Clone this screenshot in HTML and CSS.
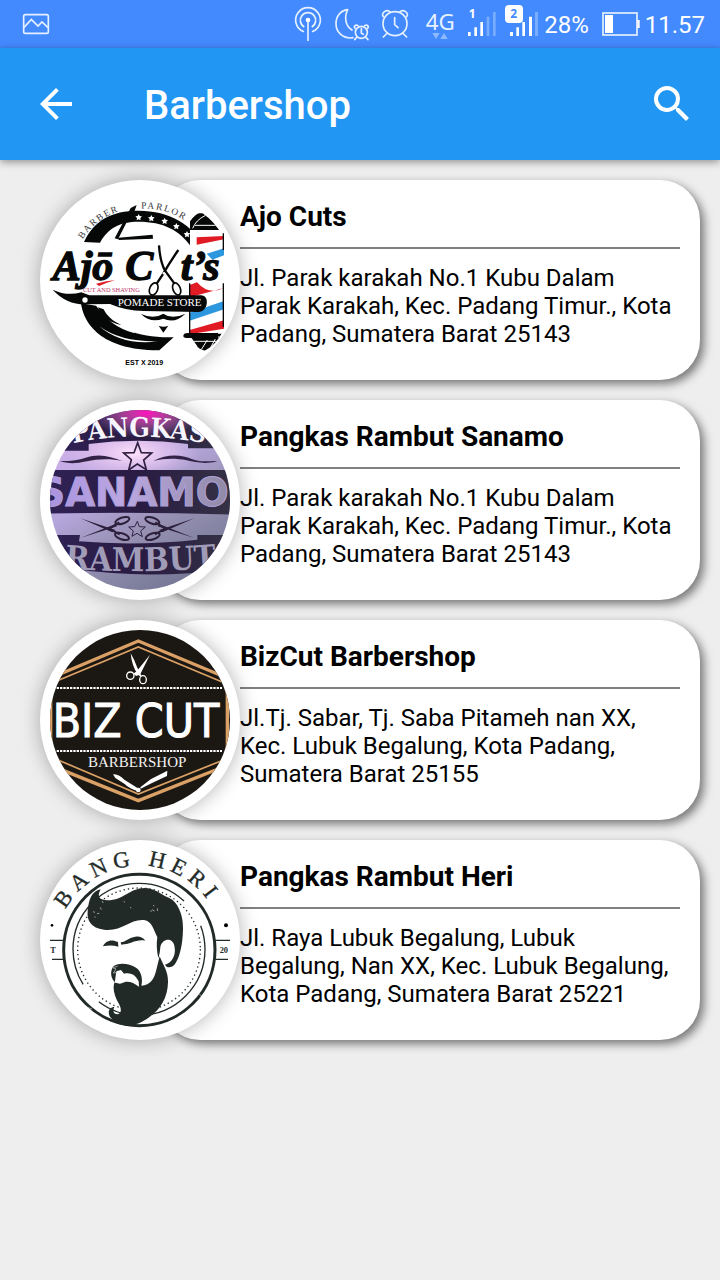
FILE: index.html
```html
<!DOCTYPE html>
<html lang="id">
<head>
<meta charset="utf-8">
<meta name="viewport" content="width=device-width, initial-scale=1">
<title>Barbershop</title>
<link rel="stylesheet" href="styles.css">
</head>
<body>
<div class="status">
  <svg class="status-icon thumb" viewBox="60 0 96 144" aria-hidden="true">
    <g fill="none" stroke="#e6f1ff" stroke-width="5"><rect x="71" y="44" width="74" height="56" rx="5"/><path d="M72 82 94 58l20 20 12-12 18 17"/></g>
  </svg>
  <div class="status-right">
    <svg class="status-icon w38" viewBox="30 0 114 144" aria-hidden="true">
      <g fill="none" stroke="#e6f1ff" stroke-width="5"><path d="M72 95a37 37 0 1 1 24 0"/><path d="M73 81a23 23 0 1 1 22 0"/><path d="M84 60v63"/></g><circle cx="84" cy="60" r="7" fill="#fff"/>
    </svg>
    <svg class="status-icon w46" viewBox="144 0 138 144" aria-hidden="true">
      <g fill="none" stroke="#e6f1ff" stroke-width="5" stroke-linecap="round"><path d="M203 29C181 32 168 49 168 71c0 25 19 43 43 43l8-1M203 29c-11 23-7 48 13 61"/><circle cx="244" cy="97" r="18"/><path d="M244 86v13l6 4M225 85c-5-6 2-13 9-8M254 77c7-5 14 2 9 8M231 111l-7 8M257 111l7 8"/></g>
    </svg>
    <svg class="status-icon w44" viewBox="282 0 132 144" aria-hidden="true">
      <g fill="none" stroke="#e6f1ff" stroke-width="5" stroke-linecap="round"><circle cx="345" cy="71" r="36"/><path d="M344 53v21l10 9M310 50c-9-11 11-25 21-14M359 36c10-11 30 3 21 14M322 99l-12 12M368 99l12 12"/></g>
    </svg>
    <svg class="status-icon w44" viewBox="414 0 132 144" role="img" aria-label="4G">
      <text class="net" x="437" y="91">4G</text><path d="M457 99h22l-11 18zM481 117h22l-11-18z" fill="#8db9ff"/>
    </svg>
    <svg class="status-icon w38" viewBox="546 0 114 144" role="img" aria-label="SIM 1">
      <text class="sim" x="566" y="53" fill="#fff">1</text>
      <path d="M564 96h8v12h-8zM583 82h8v26h-8zM601 66h8v42h-8z" fill="#fff"/><path d="M620 50h8v58h-8zM639 36h8v72h-8z" fill="#79adff"/>
    </svg>
    <svg class="status-icon w44" viewBox="0 0 132 144" role="img" aria-label="SIM 2">
      <path d="M30 96h9v12h-9zM49 82h8v26h-8zM67 66h8v42h-8zM87 50h9v58h-9z" fill="#fff"/><path d="M105 36h9v72h-9z" fill="#79adff"/><rect x="15" y="15" width="54" height="54" rx="12" fill="#fff"/>
      <text class="sim" x="31" y="54" fill="#448aff">2</text>
    </svg>
    <span>28%</span>
    <svg class="status-icon w56" viewBox="270 0 168 144" role="img" aria-label="Baterai">
      <rect x="312" y="39" width="102" height="66" fill="none" stroke="#e6f1ff" stroke-width="5"/><path d="M318 45h24v54h-24zM415 60h7v24h-7z" fill="#fff"/>
    </svg>
    <time>11.57</time>
  </div>
</div>
<header class="appbar">
  <button class="icon-button" type="button" aria-label="Kembali"><svg viewBox="0 0 24 24"><path d="M20 11H7.800l5.600-5.600L12 4l-8 8 8 8 1.400-1.400L7.800 13H20z"/></svg></button>
  <h1>Barbershop</h1>
  <button class="icon-button" type="button" aria-label="Cari"><svg viewBox="0 0 24 24"><path d="M15.500 14h-.79l-.28-.27A6.470 6.470 0 0 0 16 9.500 6.500 6.500 0 1 0 9.500 16c1.610 0 3.090-.59 4.230-1.570l.27.280v.790l5 4.990L20.490 19zm-6 0a4.500 4.500 0 1 1 0-9 4.500 4.500 0 0 1 0 9z"/></svg></button>
</header>
<main>
<ul class="shops">
  <li class="shop">
    <div class="avatar">
    <svg viewBox="30 30 600 600" role="img" aria-label="Ajo Cuts">
      <defs><path id="arc1a" d="M158 208A198 198 0 0 1 290 118"/><path id="arc1b" d="M334 116A210 210 0 0 1 500 182"/>
      <clipPath id="pole"><path d="M479 155q30-40 45-20 25 15 58 67v276q-25 50-58 64-20-5-24-16l-21-30z"/></clipPath></defs>
      <g fill="#060808">
        <path d="M162 216C192 151 245 122 325 122c95 0 164 43 198 110l-40-2C450 181 400 155 325 155c-55 0-90 18-115 63z"/>
        <path d="M153 400c8 60 60 142 235 141l43-39c-90 0-170-15-233-95z"/>
        <path d="M320 105l-18 9-48 91 10 3 39-77-4 19 8-7zM265 203l103-9 1 12-103 4z"/>
      </g>
      <path d="M206 410q30 58 108 80l-20-52z" fill="#fff"/>
      <path d="M204 412c13 31 34 46 70 53-27-12-43-27-53-47z" fill="#060808"/>
      <path d="M208 469q65 48 178 45-110 14-178-45z" fill="#fff"/>
      <g fill="#fff"><path id="star" d="m326 132 3 6 7 1-5 5 1 7-6-3-6 3 1-7-5-5 7-1z"/><use href="#star" x="38" y="3"/><use href="#star" x="78" y="11"/><use href="#star" x="113" y="27"/><use href="#star" x="145" y="51"/></g>
      <g clip-path="url(#pole)"><path d="M479 130h110v420H479z" fill="#fff"/><path d="M500 202l82-4v10l-82 16zM479 345l22-8q35 40 81 17l-103 28zM479 480l103-29v25l-103 17z" fill="#e01b24"/><path d="M530 251l52-16v21l-35 13zM479 428l103-35v25l-103 34z" fill="#2c96df"/><path d="M480 130h105v50H480zM478 491h107v60H478z" fill="#060808"/><path d="M488 175q10-25 37-38M495 166h80M482 190h102M482 501h100M492 514h80M510 545l22-35M537 541l19-34" fill="none" stroke="#fff" stroke-width="3"/></g>
      <path d="M479 340v150M580 190v50M580 340v130" stroke="#060808" stroke-width="4"/><path d="M460 498q0-9 14-9h90v15h-90q-14 0-14-6z" fill="#060808"/>
      <g class="script"><text x="68" y="331">Ajō</text><text x="286" y="331">C</text><text x="452" y="331">t’s</text></g>
      <path d="M198 341q27-8 57-11-28 9-48 18z" fill="#e01b24"/>
      <g fill="#fff" stroke="#060808" stroke-width="5"><path d="M387 226q3 48 18 76l28 38M445 240q-27 39-45 71l-20 30" fill="none" stroke-width="7"/><ellipse cx="371" cy="357" rx="12" ry="19" transform="rotate(22 371 357)"/><ellipse cx="440" cy="357" rx="11" ry="19" transform="rotate(-22 440 357)"/></g><circle cx="402" cy="310" r="4" fill="#fff"/>
      <path d="M68 359q43 20 86 8l24 9h335c27 0 22 50-8 50l-164-3q-55-1-101-21l-68 1q-61 3-104-44z" fill="#060808"/><circle cx="165" cy="390" r="8" fill="#fff"/>
      <text class="serif" x="159" y="367" font-size="19" fill="#bd3267">CUT AND SHAVING</text>
      <text class="serif" x="263" y="409" font-size="33" fill="#fff">POMADE STORE</text>
      <path d="M333 432q39 17 67-1 26 19 66 0-31 31-66 15-38 15-67-14zM386 467q15 6 29 0l-15 21z" fill="#060808"/>
      <g class="serif small" fill="#333"><text><textPath href="#arc1a">BARBER</textPath></text><text><textPath href="#arc1b">PARLOR</textPath></text></g>
      <text class="sans-bold" x="286" y="585" font-size="21">EST X 2019</text>
    </svg></div>
    <article class="card"><h2>Ajo Cuts</h2><p>Jl. Parak karakah No.1 Kubu Dalam Parak Karakah, Kec. Padang Timur., Kota Padang, Sumatera Barat 25143</p></article>
  </li>
  <li class="shop">
    <div class="avatar">
    <svg viewBox="30 30 600 600" role="img" aria-label="Pangkas Rambut Sanamo">
      <defs><clipPath id="disc"><circle cx="330" cy="330" r="270"/></clipPath>
      <linearGradient id="cloth" x1=".2" y1="0" x2=".75" y2="1"><stop offset="0" stop-color="#d9b4ee"/><stop offset=".4" stop-color="#b5a6dc"/><stop offset=".65" stop-color="#9690b2"/><stop offset="1" stop-color="#6f7490"/></linearGradient>
      <linearGradient id="band" x1="0" y1="0" x2="1" y2="0"><stop offset="0" stop-color="#302255"/><stop offset=".5" stop-color="#291b42"/><stop offset="1" stop-color="#353346"/></linearGradient>
      <linearGradient id="letters" x1="0" y1="0" x2="1" y2="0"><stop offset="0" stop-color="#a78fe0"/><stop offset=".45" stop-color="#bba8e2"/><stop offset="1" stop-color="#8f8aa5"/></linearGradient>
      <radialGradient id="pink"><stop offset="0" stop-color="#ff10bd"/><stop offset=".45" stop-color="#f65acb" stop-opacity=".55"/><stop offset="1" stop-color="#ec9be8" stop-opacity="0"/></radialGradient>
      <radialGradient id="glow"><stop offset="0" stop-color="#ffe2fb"/><stop offset="1" stop-color="#f3c6f5" stop-opacity="0"/></radialGradient>
      <path id="arc2a" d="M129 160Q330 116 570 169"/><path id="arc2b" d="M104 535Q330 554 590 530"/></defs>
      <g clip-path="url(#disc)">
        <path d="M50 50h560v560H50z" fill="url(#cloth)"/>
        <ellipse cx="310" cy="190" rx="200" ry="80" fill="url(#glow)"/>
        <g fill="url(#band)"><path d="M60 50h540v125H474v-13q-150-20-298 0v20H60zM50 240h560v134q-270-10-560-3zM50 435h100l-3 19q170 15 355-5v-14h110v100q-240 35-480 3l-82-25z"/></g>
        <ellipse cx="350" cy="68" rx="170" ry="75" fill="url(#pink)"/>
        <g class="slab" fill="#f7f5fd"><text font-size="80"><textPath href="#arc2a">PANGKAS</textPath></text></g>
        <text class="block" x="22" y="349" fill="url(#letters)">SANAMO</text>
        <g class="slab" fill="#a09cb8"><text font-size="98"><textPath href="#arc2b">RAMBUT</textPath></text></g>
        <g fill="none" stroke="#302143" stroke-width="5"><path d="m323 158 11 30 31 1-24 21 8 29-27-17-26 18 8-31-23-20 31-1z"/><path d="m322 394 6 16 18 1-14 12 5 17-16-10-15 9 4-16-14-12 18-1z" stroke-width="3"/></g>
        <path d="M90 213q45 1 77-10c41-14 75-4 111 11-39-10-78-6-107 0-38 8-58 7-81-1zM370 213c40-22 84-20 115-6 25 11 52 5 77 6-33 11-64 4-92-2-38-8-68-5-100 2z" fill="#332347"/>
        <g id="shears"><path d="M151 385l105 35-9 7zM151 444l106-42 4 7z" fill="#2d203c"/><g fill="none" stroke="#2d203c" stroke-width="6"><ellipse cx="277" cy="392" rx="22" ry="9" transform="rotate(-18 277 392)"/><ellipse cx="276" cy="439" rx="22" ry="9" transform="rotate(18 276 439)"/><path d="M238 416l31 17M238 416l30-19"/></g></g>
        <use href="#shears" transform="matrix(-1 0 0 1 644 0)"/>
      </g>
    </svg></div>
    <article class="card"><h2>Pangkas Rambut Sanamo</h2><p>Jl. Parak karakah No.1 Kubu Dalam Parak Karakah, Kec. Padang Timur., Kota Padang, Sumatera Barat 25143</p></article>
  </li>
  <li class="shop">
    <div class="avatar">
    <svg viewBox="30 30 600 600" role="img" aria-label="BizCut Barbershop">
      <circle cx="330" cy="330" r="270" fill="#1b1813"/>
      <g clip-path="url(#disc)" fill="none" stroke="#daa065"><path d="M62 204 325 93l267 111v262L325 572 62 466z" stroke-width="10"/><path d="M82 212 325 111l250 104M82 449l243 103 250-100" stroke-width="5"/></g>
      <path d="M80 234h496M80 423h496" stroke="#fff" stroke-width="6" stroke-dasharray="7 3"/>
      <text class="narrow" x="68" y="380">BIZ CUT</text>
      <text class="serif" x="174" y="472" font-size="45" fill="#f4f2ef">BARBERSHOP</text>
      <g fill="#fff"><path d="M302 130q10 17 20 43l13 26-11-4q-19-28-22-65zM360 134l-30 60-12 4-5-5z"/><path d="M249 493q18 0 34 16l48 30-5 5q-28-7-42-22l-28-18zM331 532l31-24 50-26-1 16-45 21-34 17z"/><circle cx="325" cy="540" r="7"/></g>
      <g fill="none" stroke="#fff" stroke-width="4"><circle cx="301" cy="197" r="11"/><ellipse cx="339" cy="209" rx="10" ry="12"/><path d="M311 192l12-7M332 199l-5-10"/></g>
    </svg></div>
    <article class="card"><h2>BizCut Barbershop</h2><p>Jl.Tj. Sabar, Tj. Saba Pitameh nan XX, Kec. Lubuk Begalung, Kota Padang, Sumatera Barat 25155</p></article>
  </li>
  <li class="shop">
    <div class="avatar">
    <svg viewBox="30 30 600 600" role="img" aria-label="Pangkas Rambut Heri">
      <defs><path id="arc4" d="M107 239A252 252 0 0 1 578 323"/></defs>
      <g fill="none" stroke="#222a28"><circle cx="328" cy="360" r="227" stroke-width="9"/><circle cx="327" cy="358" r="198" stroke-width="4" stroke-dasharray="440 70 570 90 74"/><circle cx="327" cy="358" r="184" stroke-width="4" stroke-dasharray="4 9"/><path d="M60 331h40M66 388h36M554 331h46M556 388h38" stroke-width="4"/></g>
      <text class="serif heri"><textPath href="#arc4">BANG HERI</textPath></text>
      <circle cx="66" cy="286" r="4"/><circle cx="588" cy="286" r="6"/>
      <g class="serif" font-size="25" font-weight="700" fill="#222a28"><text x="61" y="369">T</text><text x="569" y="369">20</text></g>
      <path d="M212 178c-13 23-2 33 20 33 49 0 67-37 112-37 28 0 47 17 67 27 30 9 50 52 48 97-1 48-10 84-24 104-9 12-25 13-30 2 20-5 33-28 29-51-3-33-37-29-43-2-1 12-2 21-6 34-5-24-6-45-3-63-12-24-15-48-40-52-43-4-64 35-120 29-39-5-52-27-49-56 3-33 11-59 39-65z" fill="#222a28"/>
      <path d="M219 349c7-17 25-23 45-13l1 14q-22-7-46-1zM272 337c18-3 26-15 44-17 14-2 25 4 30 12-29-5-45 12-72 12z" fill="#222a28"/>
      <path d="M389 379c11 28 26 45 25 78-1 52-29 93-78 118-38 20-81 11-92-10-14-15-8-34 9-34-6 11-3 21 10 22 14-4 10-20 4-31-13-21-21-48-13-66-14-14-12-32-6-45 15-14 48-12 70 2 16 10 21 34 16 54 28-3 38-19 45-48z" fill="#222a28"/>
      <path d="M259 424l14-4 9 11c23-5 36 7 44 23l1 16c-18-14-37-20-52-10-10 4-16-5-21 0z" fill="#fff"/>
      <path d="M263 409l-16 4 11 4-8 12 13-2M229 205l5 3M216 213l4 6M211 232l3 7M189 245l6 2M201 251l7-1M193 260l4 2M369 226l4 2M366 239l8 4M382 235l1 8M361 244l5-2M281 214l4 3M300 232l4 2M173 532l13 5M507 491l7 7" stroke="#cbd2ce" stroke-width="2" fill="none"/>
    </svg></div>
    <article class="card"><h2>Pangkas Rambut Heri</h2><p>Jl. Raya Lubuk Begalung, Lubuk Begalung, Nan XX, Kec. Lubuk Begalung, Kota Padang, Sumatera Barat 25221</p></article>
  </li>
</ul>
</main>
</body>
</html>
```
FILE: styles.css
```css
* { box-sizing: border-box; }
body { margin: 0; min-height: 100vh; background: #eee; color: #000; font-family: Roboto, "Liberation Sans", sans-serif; }
h1, h2, p, ul { margin: 0; padding: 0; }

.status { display: flex; justify-content: space-between; align-items: center; height: 48px; padding: 0 15px 0 20px; background: #448aff; color: #fff; font-size: 24px; line-height: 48px; }
.status-right { display: flex; align-items: center; }
.status-icon { display: block; height: 48px; }
.status span, .status time { padding-top: 2px; line-height: 46px; }
.thumb { width: 32px; }
.w38 { width: 38px; }
.w44 { width: 44px; }
.w46 { width: 46px; }
.w56 { width: 56px; }
.net { font: 400 67px "Noto Sans", sans-serif; fill: #e6f1ff; }
.sim { font: 700 36px "Noto Sans", sans-serif; }

.appbar { position: relative; display: flex; align-items: center; height: 112px; padding: 0 24px 0 32px; background: #2196f3; color: #fff; box-shadow: 0 2px 8px rgba(0, 0, 0, .4); }
.appbar h1 { flex: 1; margin-left: 64px; padding-top: 4px; font-size: 40px; font-weight: 500; line-height: 48px; }
.icon-button { width: 48px; height: 48px; padding: 0; border: 0; background: none; color: inherit; }
.icon-button svg { display: block; width: 48px; height: 48px; fill: currentColor; }

.shops { display: flex; flex-direction: column; gap: 20px; padding: 20px 20px 20px 40px; list-style: none; }
.shop { display: flex; }
.avatar { position: relative; flex: none; width: 200px; height: 200px; border-radius: 50%; background: #fff; box-shadow: 0 0 20px rgba(0, 0, 0, .3); }
.avatar svg { display: block; width: 100%; height: 100%; }
.card { flex: 1; min-width: 0; min-height: 200px; margin-left: -80px; padding: 20px 20px 20px 80px; border-radius: 40px; background: #fff; box-shadow: 4px 4px 10px rgba(0, 0, 0, .5); }
.card h2 { padding: 1px 0 14px; border-bottom: 2px solid #808080; font-size: 28px; font-weight: 700; line-height: 32px; }
.card p { padding-top: 15px; font-size: 24px; line-height: 28px; }

.serif { font-family: "Liberation Serif", serif; }
.small { font-size: 28px; letter-spacing: 5px; }
.sans-bold { font-family: "Liberation Sans", sans-serif; font-weight: 700; }
.script text { font: italic 700 126px "Liberation Serif", serif; fill: #060808; stroke: #060808; stroke-width: 4px; }
.slab { font-family: "DejaVu Serif Condensed", "DejaVu Serif", serif; font-weight: 700; }
.block { font: 700 116px "DejaVu Sans", sans-serif; stroke: #b0a0d8; stroke-width: 3px; }
.narrow { font: 400 138px "DejaVu Sans Condensed", "DejaVu Sans", sans-serif; fill: #fff; stroke: #fff; stroke-width: 3px; }
.heri { font-size: 68px; letter-spacing: 17px; fill: #222a28; stroke: #222a28; stroke-width: 1px; }
```
